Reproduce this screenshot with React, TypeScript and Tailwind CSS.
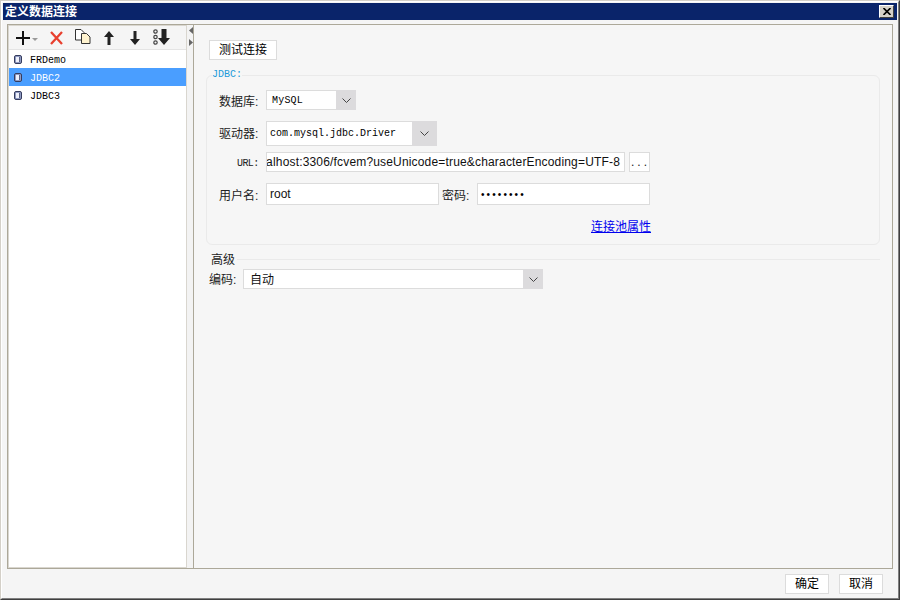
const cjk = "font-['Liberation_Sans','Noto_Sans_CJK_SC',sans-serif]";
const mono = "font-['Liberation_Mono','Noto_Sans_CJK_SC',monospace]";

function Chevron() {
  return (
    <svg width="9" height="5" viewBox="0 0 9 5" fill="none" stroke="#444" strokeWidth="1">
      <path d="M0.5 0.5l4 4 4-4" />
    </svg>
  );
}

function DbIcon() {
  return (
    <svg width="8" height="9" viewBox="0 0 8 9" className="shrink-0">
      <rect x="0.5" y="0.5" width="7" height="8" rx="1.5" fill="#8f9ac2" stroke="#353c5e" />
      <rect x="2" y="2" width="3" height="5" fill="#eef0fa" />
      <rect x="5" y="2" width="1" height="5" fill="#5c6488" />
    </svg>
  );
}

function Select({ text, width, arrow, height, textClass }: { text: string; width: string; arrow: string; height: string; textClass: string }) {
  return (
    <div className={`flex ${width} ${height} bg-white border border-[#dcdcdc]`}>
      <div className={`flex-1 flex items-center ${textClass}`}>{text}</div>
      <div className={`${arrow} -my-px -mr-px bg-[#dcdbdd] flex items-center justify-center`}>
        <Chevron />
      </div>
    </div>
  );
}

function Row({ text, selected }: { text: string; selected?: boolean }) {
  return (
    <div className={`h-[18px] flex items-center pl-[5px] gap-[8px] ${selected ? "bg-[#4a9eff] text-white" : "text-black"}`}>
      <DbIcon />
      <span className={`text-[10px] pt-[2px] ${mono}`}>{text}</span>
    </div>
  );
}

function Toolbar() {
  return (
    <div className="h-[24px] flex items-center pl-[7px] bg-[#f5f5f5] border-b border-[#e4e4e4]">
      <svg width="22" height="14" viewBox="0 0 22 14">
        <path d="M7 0v14M0 7h14" stroke="#111" strokeWidth="2" />
        <path d="M16 7h6l-3 3z" fill="#999" />
      </svg>
      <svg width="13" height="14" viewBox="0 0 13 14" className="ml-[12px]">
        <path d="M1 1l11 12M12 1L1 13" stroke="#e8402f" strokeWidth="2.3" />
      </svg>
      <svg width="16" height="15" viewBox="0 0 16 15" className="ml-[12px] -mt-[3px]">
        <path d="M0.5 0.5h5.5l3 3v7.5h-8.500z" fill="#fff" stroke="#333" />
        <path d="M6.500 4.500h5l3.500 3.500v6.500h-8.500z" fill="#fff3cf" stroke="#333" />
      </svg>
      <svg width="10" height="14" viewBox="0 0 10 14" className="ml-[13px]">
        <path d="M5 0l5 6H6.500v8h-3V6H0z" fill="#222" />
      </svg>
      <svg width="10" height="14" viewBox="0 0 10 14" className="ml-[16px]">
        <path d="M5 14l5-6H6.500V0h-3v8H0z" fill="#222" />
      </svg>
      <svg width="17" height="16" viewBox="0 0 17 16" className="ml-[13px] -mt-[1px]">
        <circle cx="2.5" cy="2.500" r="1.700" fill="none" stroke="#444" strokeWidth="1.200" />
        <circle cx="2.5" cy="8" r="1.700" fill="none" stroke="#444" strokeWidth="1.200" />
        <circle cx="2.5" cy="13.500" r="1.700" fill="none" stroke="#444" strokeWidth="1.200" />
        <path d="M11 16l6-7h-3.500V0h-5v9H5z" fill="#222" />
      </svg>
    </div>
  );
}

export default function App() {
  return (
    <div className={`w-[900px] h-[600px] flex flex-col bg-[#f5f5f5] border border-[#d4d0c8] border-r-[#404040] border-b-[#404040] overflow-hidden ${cjk}`}>
      <div className="flex-1 flex flex-col min-h-0 border border-white border-r-[#808080] border-b-[#808080] px-[1px] pt-[1px]">
        <div className="h-[17px] shrink-0 bg-[#0a246a] flex items-center justify-between pl-[2px] pr-[3px]">
          <span className="text-white text-[12px] font-bold leading-none">定义数据连接</span>
          <div className="w-[15px] h-[13px] bg-[#d4d0c8] border border-white border-r-[#404040] border-b-[#404040] flex items-center justify-center">
            <svg width="8" height="7" viewBox="0 0 8 7">
              <path d="M0.5 0l7 7M7.5 0l-7 7" stroke="#000" strokeWidth="1.6" />
            </svg>
          </div>
        </div>

        <div className="mt-[4px] ml-[4px] mr-[4px] h-[545px] shrink-0 flex border border-[#aca899] bg-[#f6f6f6]">
          <div className="w-[179px] shrink-0 border border-[#d9d6cf] flex flex-col">
            <Toolbar />
            <div className="flex-1 bg-white">
              <Row text="FRDemo" />
              <Row text="JDBC2" selected />
              <Row text="JDBC3" />
            </div>
          </div>
          <div className="w-[7px] shrink-0 bg-[#f3f3f3] border-r border-[#aca899] flex flex-col items-end pt-[2px] gap-[5px]">
            <svg width="4" height="7" viewBox="0 0 4 7"><path d="M4 0v7L0 3.5z" fill="#666" /></svg>
            <svg width="4" height="7" viewBox="0 0 4 7"><path d="M0 0v7l4-3.5z" fill="#666" /></svg>
          </div>

          <div className="flex-1 min-w-0 pt-[15px] pl-[12px] pr-[12px]">
            <button className="ml-[3px] block w-[68px] h-[20px] bg-white border border-[#dcdcdc] text-[12px] text-black leading-none">测试连接</button>

            <fieldset className="mt-[8px] h-[177px] border border-[#eaeaea] rounded-[6px] pl-[12px]">
              <legend className={`ml-[-7px] px-[0px] text-[10px] leading-[14px] text-[#1a9ad9] ${mono}`}>JDBC:</legend>

              <div className="flex items-center h-[20px] mt-[8px]">
                <span className="w-[47px] pt-[3px] text-[12px] text-[#222]">数据库:</span>
                <Select text="MySQL" width="w-[90px]" height="h-[20px]" arrow="w-[20px]" textClass={`pl-[5px] text-[10px] tracking-[0.2px] ${mono}`} />
              </div>

              <div className="flex items-center h-[25px] mt-[11px]">
                <span className="w-[47px] text-[12px] text-[#222]">驱动器:</span>
                <Select text="com.mysql.jdbc.Driver" width="w-[171px]" height="h-[25px]" arrow="w-[25px]" textClass={`pl-[3px] text-[10px] ${mono}`} />
              </div>

              <div className="flex items-center h-[20px] mt-[6px]">
                <span className={`w-[47px] pl-[18px] pt-[3px] text-[10px] tracking-[-0.6px] text-[#222] ${mono}`}>URL:</span>
                <div className="w-[359px] h-[20px] bg-white border border-[#dcdcdc] overflow-hidden flex justify-end items-center pr-[4px]">
                  <span className="text-[12px] text-[#111] whitespace-nowrap tracking-[0.17px]">alhost:3306/fcvem?useUnicode=true&amp;characterEncoding=UTF-8</span>
                </div>
                <div className="ml-[4px] w-[21px] h-[20px] bg-white border border-[#dcdcdc] text-[12px] text-[#222] tracking-[3px] pl-[2px] flex items-center justify-center">...</div>
              </div>

              <div className="flex items-center h-[22px] mt-[11px]">
                <span className="w-[47px] pt-[3px] text-[12px] text-[#222]">用户名:</span>
                <div className="w-[173px] h-[22px] bg-white border border-[#dcdcdc] flex items-center pl-[3px] text-[12px] text-[#111]">root</div>
                <span className="ml-[3px] w-[35px] pt-[3px] text-[12px] text-[#222]">密码:</span>
                <div className="w-[173px] h-[22px] bg-white border border-[#dcdcdc] flex items-center pl-[3px] text-[10px] text-black tracking-[2.1px]">••••••••</div>
              </div>

              <div className="w-[432px] text-right mt-[9px]">
                <a className="text-[12px] leading-[16px] text-[#0000ee] underline" href="#">连接池属性</a>
              </div>
            </fieldset>

            <div className="mt-[6px] flex items-center h-[16px]">
              <span className="ml-[5px] pr-[2px] pt-[1px] text-[12px] text-[#222]">高级</span>
              <div className="flex-1 h-px bg-[#eaeaea]" />
            </div>

            <div className="mt-[2px] flex items-center h-[20px]">
              <span className="ml-[3px] w-[34px] pt-[1px] text-[12px] text-[#222]">编码:</span>
              <Select text="自动" width="w-[300px]" height="h-[20px]" arrow="w-[20px]" textClass="pl-[6px] pt-[1px] text-[12px] text-[#111]" />
            </div>
          </div>
        </div>

        <div className="flex-1 flex justify-end items-center gap-[10px] pr-[14px]">
          <button className="w-[44px] h-[20px] bg-white border border-[#dcdcdc] text-[12px] text-black leading-none">确定</button>
          <button className="w-[44px] h-[20px] bg-white border border-[#dcdcdc] text-[12px] text-black leading-none">取消</button>
        </div>
      </div>
    </div>
  );
}
